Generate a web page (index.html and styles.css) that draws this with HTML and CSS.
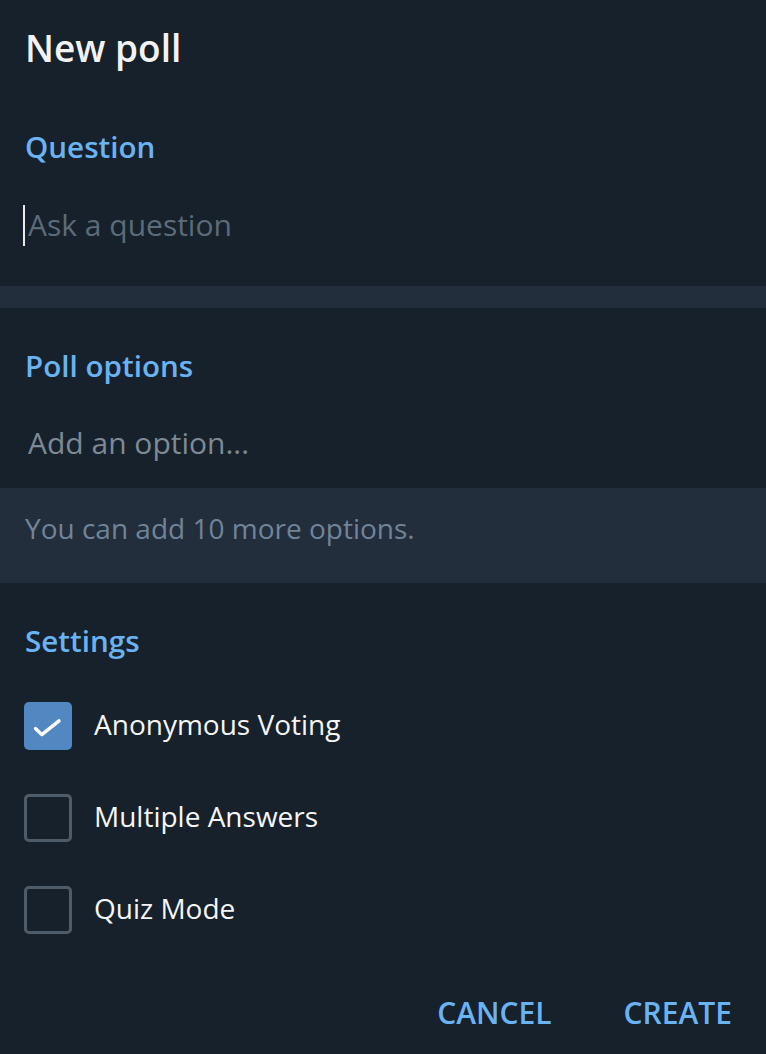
FILE: index.html
```html
<!DOCTYPE html>
<html>
<head>
<meta charset="utf-8">
<link rel="stylesheet" href="styles.css">
</head>
<body>
<div class="box">
  <div class="title">New poll</div>
  <div class="section-head first">Question</div>
  <div class="input-row"><span class="cursor"></span><span class="ph">Ask a question</span></div>
  <div class="band"></div>
  <div class="section-head opts">Poll options</div>
  <div class="input-row option"><span class="ph light">Add an option...</span></div>
  <div class="hint">You can add 10 more options.</div>
  <div class="section-head settings">Settings</div>
  <div class="checks">
    <div class="check-row">
      <span class="cb checked"><svg viewBox="0 0 48 48" width="48" height="48"><path d="M11.5 26.5 L17.8 32.6 L35 18.8" fill="none" stroke="#ffffff" stroke-width="3.4" stroke-linecap="round" stroke-linejoin="round"/></svg></span>
      <span class="cb-label">Anonymous Voting</span>
    </div>
    <div class="check-row">
      <span class="cb"></span>
      <span class="cb-label">Multiple Answers</span>
    </div>
    <div class="check-row">
      <span class="cb"></span>
      <span class="cb-label">Quiz Mode</span>
    </div>
  </div>
  <div class="buttons">
    <span class="btn">CANCEL</span>
    <span class="btn">CREATE</span>
  </div>
</div>
</body>
</html>
```
FILE: styles.css
```css
html, body {
  margin: 0;
  padding: 0;
  background: #17212b;
}
.box {
  width: 766px;
  height: 1054px;
  background: #17212b;
  font-family: "Open Sans", "Noto Sans", sans-serif;
  color: #f5f5f5;
  overflow: hidden;
}
.title {
  padding: 24px 0 0 25px;
  font-size: 37px;
  line-height: 48px;
  font-weight: 600;
  color: #f2f2f2;
}
.section-head {
  padding-left: 25px;
  font-size: 29.6px;
  line-height: 40px;
  font-weight: 600;
  color: #6ab3f3;
}
.section-head.first { margin-top: 55px; }
.section-head.opts { margin-top: 38px; }
.section-head.settings { margin-top: 38px; }
.input-row {
  display: flex;
  align-items: center;
  height: 40px;
  margin-top: 38px;
  padding-left: 23px;
  padding-bottom: 41px;
  font-size: 30px;
  line-height: 40px;
}
.input-row.option {
  margin-top: 37px;
  padding-left: 28px;
  padding-bottom: 25px;
}
.cursor {
  width: 2px;
  height: 41px;
  background: #e8e8e8;
  margin-right: 3px;
}
.ph { color: #5c6b79; }
.ph.light { color: #7d8a96; }
.band {
  height: 22px;
  background: #232e3c;
}
.hint {
  background: #232e3c;
  padding: 20px 0 35px 25px;
  font-size: 28px;
  line-height: 40px;
  color: #708499;
}
.checks {
  display: flex;
  flex-direction: column;
  gap: 44px;
  margin-top: 41px;
  padding-left: 24px;
}
.check-row {
  display: flex;
  align-items: center;
  gap: 22px;
  height: 48px;
}
.cb {
  box-sizing: border-box;
  width: 48px;
  height: 48px;
  border: 3px solid #4e5b69;
  border-radius: 5px;
  flex: none;
}
.cb.checked {
  border: none;
  background: #5288c1;
}
.cb svg { display: block; }
.cb-label {
  font-size: 28px;
  line-height: 44px;
  padding-bottom: 4px;
  color: #f5f5f5;
}
.buttons {
  display: flex;
  justify-content: flex-end;
  gap: 72px;
  margin-top: 59px;
  padding-right: 34px;
}
.btn {
  font-size: 30px;
  line-height: 40px;
  font-weight: 600;
  color: #6ab3f3;
}
```
